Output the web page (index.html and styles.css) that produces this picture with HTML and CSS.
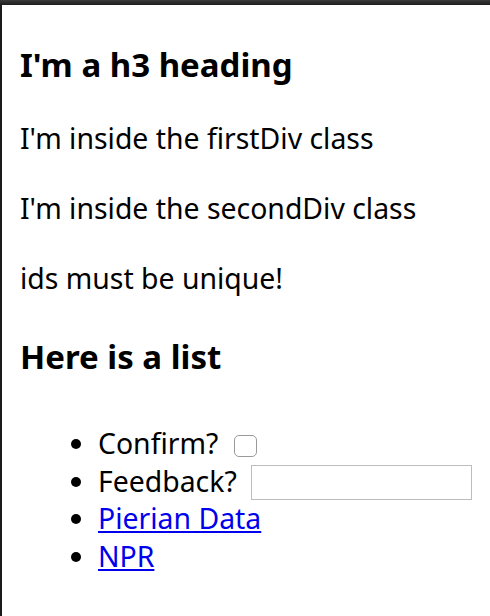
FILE: index.html
```html
<!DOCTYPE html>
<html>
<head>
<meta charset="utf-8">
<link rel="stylesheet" href="styles.css">
</head>
<body>
<div class="topbar"></div>
<div class="page">
  <h3 class="heading heading-top">I'm a h3 heading</h3>
  <p class="para">I'm inside the firstDiv class</p>
  <p class="para">I'm inside the secondDiv class</p>
  <p class="para">ids must be unique!</p>
  <h3 class="heading heading-list">Here is a list</h3>
  <ul class="list">
    <li class="item">Confirm? <span class="checkbox"></span></li>
    <li class="item">Feedback? <span class="textbox"></span></li>
    <li class="item"><a class="link" href="#">Pierian Data</a></li>
    <li class="item"><a class="link" href="#">NPR</a></li>
  </ul>
</div>
</body>
</html>
```
FILE: styles.css
```css
html, body {
  margin: 0;
  padding: 0;
  background: #ffffff;
  height: 100%;
  overflow: hidden;
}
body {
  font-family: "Noto Sans", "Open Sans", sans-serif;
  color: #000;
}
.topbar {
  height: 5px;
  background: linear-gradient(#3a3a3a, #1c1c1c);
}
.page {
  border-left: 2px solid #1a1a1a;
  height: 100%;
  padding: 18px 0 0 18px;
  box-sizing: border-box;
  font-size: 28.4px;
}
.heading {
  font-size: 33px;
  font-weight: bold;
  line-height: 44px;
  margin: 0;
}
.heading-top {
  margin: 20px 0 30px;
}
.heading-list {
  margin: 36px 0 46px;
}
.para {
  margin: 28px 0;
  line-height: 42px;
}
.list {
  margin: 28px 0;
  padding-left: 78px;
  list-style: disc;
}
.item {
  line-height: 37.5px;
}
.checkbox {
  display: inline-block;
  width: 21px;
  height: 20px;
  border: 1px solid #9a9a9a;
  border-radius: 5px;
  vertical-align: -3px;
  margin-left: 8px;
  background: #fff;
}
.textbox {
  display: inline-block;
  width: 219px;
  height: 33px;
  border: 1px solid #bdbdbd;
  vertical-align: -8px;
  margin-left: 7px;
}
.link {
  color: #0000ee;
  text-decoration: underline;
}
```
